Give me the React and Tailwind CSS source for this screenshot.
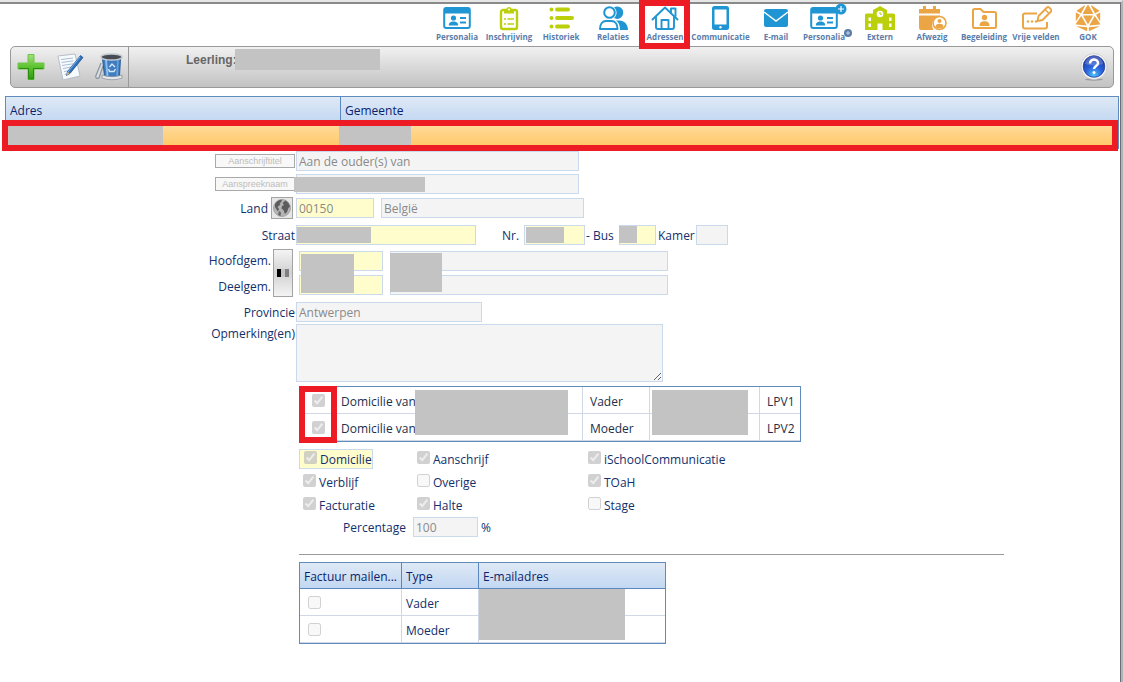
import React from "react";
import { FaDiceD20 } from "react-icons/fa";

const BLUE = "#1f96d3";
const LIME = "#bccf0b";
const ORANGE = "#eca545";

function IdCard() {
  return (
    <>
      <rect x="1.2" y="2" width="25.6" height="20" rx="2" fill="none" stroke={BLUE} strokeWidth="2" />
      <path d="M1 3h26v4.5H1z" fill={BLUE} />
      <circle cx="10.5" cy="12" r="2.6" fill={BLUE} />
      <path d="M5.8 19.5c0-3 2-4 4.700-4s4.700 1 4.700 4z" fill={BLUE} />
      <path d="M17 12h6M17 16.500h6" stroke={BLUE} strokeWidth="2" />
    </>
  );
}

const icons = {
  card: <IdCard />,
  clipboard: (
    <>
      <rect x="6" y="4" width="16" height="19" rx="2" fill="none" stroke={LIME} strokeWidth="2.4" />
      <path d="M9 7.500V3.500h2.500a2.500 2.500 0 0 1 5 0H19v4z" fill={LIME} />
      <circle cx="14" cy="3.500" r="1" fill="#fff" />
      <path d="M9 13h2M9 18h2M12.500 13H19M12.500 18H19" stroke={LIME} strokeWidth="1.700" />
    </>
  ),
  list: (
    <>
      <circle cx="4.500" cy="3.500" r="2" fill={LIME} />
      <circle cx="4.500" cy="12" r="2" fill={LIME} />
      <circle cx="4.500" cy="20.500" r="2" fill={LIME} />
      <path d="M10 3.500h11M10 12h15M10 20.500h11" stroke={LIME} strokeWidth="4" strokeLinecap="round" />
    </>
  ),
  people: (
    <>
      <circle cx="10.500" cy="6.500" r="5.300" fill="none" stroke={BLUE} strokeWidth="2" />
      <path d="M15 1.300a6.200 6.200 0 1 1 0 10.800c3.400-3 3.400-7.800 0-10.800z" fill={BLUE} />
      <path d="M1 23c0-5.200 2.600-8 6-8h5.500c3.400 0 6 2.800 6 8z" fill="none" stroke={BLUE} strokeWidth="2" strokeLinejoin="round" />
      <path d="M17 14.500h3.500c4.500 0 8.500 3.800 8.500 9.500h-8c0-4.300-1-7.500-4-9.500z" fill={BLUE} />
    </>
  ),
  house: (
    <g fill="none" stroke={BLUE} strokeWidth="1.900" strokeLinecap="round" strokeLinejoin="round">
      <path d="M1.500 13.500 14 1.500l12.500 12" />
      <path d="M5 11v10a2 2 0 0 0 2 2h14a2 2 0 0 0 2-2V11" />
      <path d="M20 6.500V2.500h4.500V10" />
      <path d="M10.500 22.500V14h7v8.500" />
    </g>
  ),
  phone: (
    <>
      <rect x="6" y="0" width="17" height="24" rx="2.500" fill={BLUE} />
      <path d="M8.500 3.500h12v15h-12z" fill="#fff" />
      <circle cx="14.500" cy="21.300" r="1.200" fill="#fff" />
    </>
  ),
  mail: (
    <>
      <rect x="2" y="3" width="24" height="18" rx="2" fill={BLUE} />
      <path d="m2 6 12 9 12-9" fill="none" stroke="#fff" strokeWidth="1.500" />
    </>
  ),
  cardPlus: <IdCard />,
  school: (
    <>
      <path d="M-1 9q0-1.500 1.500-1.500H7V4l7-4 7 4v3.500h6.500Q29 7.500 29 9v15H-1z" fill={LIME} />
      <circle cx="14" cy="8" r="3.300" fill="#fff" />
      <path d="M14 6v2.200h2" fill="none" stroke={LIME} />
      <path d="M11.500 24v-6.500h5V24zM2.500 11.500H5V15H2.500zM2.500 17.500H5V21H2.500zM23 11.500h2.500V15H23zM23 17.500h2.500V21H23z" fill="#fff" />
    </>
  ),
  absent: (
    <>
      <path d="M1 3h4V0h3v3h7V0h3v3h4v4.500H1zM1 9.500h21v1c-7 .500-10 7-6.500 13.500H3q-2 0-2-2z" fill={ORANGE} />
      <circle cx="21.500" cy="17" r="6.500" fill="#fff" stroke={ORANGE} strokeWidth="1.600" />
      <circle cx="21.500" cy="15" r="2" fill={ORANGE} />
      <path d="M17.500 21c0-2.500 1.500-3.300 4-3.300s4 .800 4 3.300c-2 2-6 2-8 0z" fill={ORANGE} />
    </>
  ),
  folder: (
    <>
      <path d="M3 4.500q0-1.500 1.500-1.500h6l3 3h11q1.500 0 1.500 1.500v13q0 1.500-1.500 1.500h-20Q3 22 3 20.500z" fill="none" stroke={ORANGE} strokeWidth="2" />
      <circle cx="14.500" cy="11.500" r="2.700" fill={ORANGE} />
      <path d="M9.500 20c0-3.500 2-4.800 5-4.800s5 1.300 5 4.800z" fill={ORANGE} />
    </>
  ),
  pencil: (
    <>
      <path d="M15 7.500H3Q1 7.500 1 9.500v11q0 2 2 2h20q2 0 2-2V16" fill="none" stroke={ORANGE} strokeWidth="2" />
      <path d="m15.500 15 1-5L25 1.500q1-1 2.200 0L29 3.300q1 1 0 2.200L20.500 14z" fill="none" stroke={ORANGE} strokeWidth="1.900" />
      <path d="m23 3.500 4 4" stroke={ORANGE} strokeWidth="1.500" />
      <circle cx="6" cy="15.500" r="1.200" fill={ORANGE} />
      <circle cx="10" cy="15.500" r="1.200" fill={ORANGE} />
      <circle cx="14" cy="15.500" r="1.200" fill={ORANGE} />
    </>
  ),
  die: <FaDiceD20 x="1" y="-1" size={26} color={ORANGE} />,
};

const navItems = [
  ["Personalia", "card"],
  ["Inschrijving", "clipboard"],
  ["Historiek", "list"],
  ["Relaties", "people"],
  ["Adressen", "house"],
  ["Communicatie", "phone"],
  ["E-mail", "mail"],
  ["Personalia", "cardPlus"],
  ["Extern", "school"],
  ["Afwezig", "absent"],
  ["Begeleiding", "folder"],
  ["Vrije velden", "pencil"],
  ["GOK", "die"],
];

function NavItem({ label, icon }) {
  const wide = icon === "phone";
  const plus = icon === "cardPlus";
  return (
    <a
      href="#"
      className={`relative flex shrink-0 flex-col items-center pt-px ${wide ? "w-[59px]" : "w-[52px]"} ${
        plus ? "pr-2" : ""
      }`}
    >
      <svg viewBox="-1 -1 31 26" className="h-[26px] w-[31px]" aria-hidden="true">
        {icons[icon]}
      </svg>
      <span className="whitespace-nowrap text-[8px] leading-[12px] font-bold text-[#5b7daa]">{label}</span>
      {plus && (
        <svg viewBox="0 0 12 12" className="absolute top-[-1px] right-[7px] size-3" aria-hidden="true">
          <circle cx="6" cy="6" r="5.500" fill={BLUE} />
          <path d="M6 3v6M3 6h6" stroke="#fff" strokeWidth="1.200" />
        </svg>
      )}
      {plus && (
        <svg viewBox="0 0 8 8" className="absolute top-[25px] right-[2px] size-2" aria-hidden="true">
          <circle cx="4" cy="4" r="4" fill="#5b7daa" />
          <path d="M4 2v4M2 4h4" stroke="#c9d5e6" />
        </svg>
      )}
      {icon === "house" && (
        <span className="pointer-events-none absolute top-[-4px] left-0 z-10 h-[49px] w-[51px] border-6 border-[#ed1c24]" />
      )}
    </a>
  );
}

function PlusIcon() {
  return (
    <svg viewBox="0 0 28 28" className="size-7" aria-hidden="true">
      <defs>
        <linearGradient id="plus" x1="0" y1="0" x2="0" y2="1">
          <stop offset="0" stopColor="#a6e07c" />
          <stop offset=".5" stopColor="#5cc22f" />
          <stop offset="1" stopColor="#2e9a10" />
        </linearGradient>
      </defs>
      <path d="M11 1.500h6V10h10v6H17v10.500h-6V16H1v-6h10z" fill="url(#plus)" stroke="#6cc444" strokeLinejoin="round" />
      <path d="M2 15.500h9.500V26h5V15.500H26" fill="none" stroke="#2a8c10" />
    </svg>
  );
}

function NoteIcon() {
  return (
    <svg viewBox="0 0 28 28" className="size-7" aria-hidden="true">
      <path d="m2 3 17-2 5 22-17 4z" fill="#f8fbfe" stroke="#b6bec8" />
      <path d="m5 6.500 12-1.500M5.500 9.500l12-1.700M6 12.500l11-1.700M7 15.500l8-1.500M8 18.500l6-1M8.500 21.500l5-1" stroke="#a7bdd4" />
      <path d="M24.500 2.500 11.500 18.500l-1 4 3.500-2L27 4.500z" fill="#2f6fb7" stroke="#1d4e8c" strokeWidth=".7" />
      <path d="m24 4-12 15" stroke="#73b2ea" />
      <path d="m11.500 18.700-1 3.800 3.300-2z" fill="#e3b65c" />
    </svg>
  );
}

function TrashIcon() {
  return (
    <svg viewBox="0 0 28 28" className="size-7" aria-hidden="true">
      <path d="M6 10 .8 23c-.5 2.500 2.500 3.500 3.500 1L8 13" fill="#d8dde2" stroke="#8b949d" strokeWidth="1.200" />
      <path d="M7.500 5h18l-1 18q-7.500 3-15 0z" fill="#3f7cc0" stroke="#2a5c97" />
      <path d="m11 7 1.500 16" stroke="#8dbdec" strokeWidth="2" />
      <path d="m23 7-1 16" stroke="#6ba4dd" strokeWidth="1.500" />
      <ellipse cx="16.500" cy="4" rx="10.500" ry="3" fill="#474c52" stroke="#c3c8cd" strokeWidth="1.500" />
      <path d="M7 22q10 3.500 20 0v3q-10 3.500-20 0z" fill="#e6e9ec" stroke="#858d95" strokeWidth=".7" />
      <path d="m14.500 14 2.500-3 3 3M20.500 16l-1.500 2.500h-4.500L13.500 16" fill="none" stroke="#d6e8fa" strokeWidth="1.400" />
    </svg>
  );
}

function HelpIcon() {
  return (
    <svg viewBox="0 0 28 28" className="size-7" aria-hidden="true">
      <defs>
        <radialGradient id="help" cx=".5" cy=".9" r=".8">
          <stop offset="0" stopColor="#4fc3ff" />
          <stop offset=".5" stopColor="#2a62da" />
          <stop offset="1" stopColor="#1d3aa8" />
        </radialGradient>
      </defs>
      <ellipse cx="14" cy="26.500" rx="9" ry="1.200" fill="#9a9a9a" />
      <circle cx="14" cy="13.500" r="13" fill="#f6f6f6" stroke="#c4c4c4" strokeWidth=".7" />
      <circle cx="14" cy="13.500" r="10.800" fill="url(#help)" stroke="#1b318f" strokeWidth=".7" />
      <path d="M5 11a9 8 0 0 1 18 0q-9 3-18 0z" fill="#fff" opacity=".22" />
      <path d="M10 10.500c0-5.500 8.500-5 8 0-.3 2.500-4 2.800-4 5.500" fill="none" stroke="#fff" strokeWidth="2.500" />
      <circle cx="14" cy="19.500" r="1.500" fill="#fff" />
    </svg>
  );
}

function Globe() {
  return (
    <svg viewBox="0 0 18 18" className="size-[18px]" aria-hidden="true">
      <circle cx="9" cy="9" r="8.500" fill="#b4b4b4" stroke="#999" strokeWidth=".8" />
      <path d="M2 5q3-4.500 7-4.300L8 3.500 6.500 4l1 1.500L4.500 8l1.500 2-1 2.500L2 8z" fill="#5c5c5c" />
      <path d="m9.500 4 3-2.500q3.500 2 4.500 6L15.500 9 14 13l-2 2-1.500-4-2-1.500L9 7l2-1z" fill="#5c5c5c" />
      <path d="m6 12 2 1.500L7.500 17 5 16z" fill="#666" />
    </svg>
  );
}

const Mask = ({ className }) => <span aria-hidden="true" className={`absolute bg-[#c3c3c3] ${className}`} />;

function Field({ label, value = "", yellow, className, mask }) {
  return (
    <span className={`relative flex h-5 ${className}`}>
      <input
        id={label}
        aria-label={label}
        disabled
        defaultValue={value}
        className={`h-5 w-full min-w-0 border border-[#cbd9ec] px-[2px] text-[12px] text-[#8a8a8a] ${
          yellow ? "bg-[#fffdcb]" : "bg-[#f4f4f4]"
        }`}
      />
      {mask && <Mask className={mask} />}
    </span>
  );
}

const Label = ({ htmlFor, children }) => (
  <label htmlFor={htmlFor} className="w-[296px] shrink-0 pt-[2px] pr-px text-right">
    {children}
  </label>
);

function SmallButton({ children }) {
  return (
    <span className="flex w-[295px] shrink-0 justify-end">
      <button
        disabled
        className="h-[14px] w-20 border border-[#a9a9a9] bg-[#f8f8f8] text-center font-['Liberation_Sans',sans-serif] text-[9px] leading-3 text-[#bdbdbd]"
      >
        {children}
      </button>
    </span>
  );
}

function Check({ label, checked }) {
  return (
    <label className="flex h-[18px] items-center gap-[3px] whitespace-nowrap">
      <input type="checkbox" disabled defaultChecked={checked} className="mb-[3px] size-[13px] shrink-0" />
      <span className="pt-[2px]">{label}</span>
    </label>
  );
}

const headCell = "border-r border-[#5b87bf] px-1 pt-[2px] text-left font-normal last:border-r-0";
const cell = "h-[27px] border-r border-b border-[#d0d7e5] last:border-r-0";
const textCell = "pt-1";

export default function App() {
  return (
    <div className="min-h-screen border-t-2 border-r-2 border-t-[#e6e6e6] border-r-[#b4b4b4] bg-white font-['Open_Sans','Noto_Sans',sans-serif] text-[12px] leading-4 text-[#12306b]">
      <div className="flex min-h-[680px] flex-col border-t-2 border-r border-t-[#8a8a8a] border-r-[#6b6f78]">
        <nav className="flex h-[42px] justify-end pr-[6px]">
          {navItems.map(([label, icon]) => (
            <NavItem key={icon} label={label} icon={icon} />
          ))}
        </nav>

        <div className="mr-[6px] ml-[10px] flex h-[42px] items-center rounded-[5px] border border-[#999] bg-linear-to-b from-[#f1f1f1] to-[#c2c2c2]">
          <div className="flex h-full w-[118px] items-center gap-[11px] border-r border-[#999] pl-[6px]">
            <button aria-label="Toevoegen"><PlusIcon /></button>
            <button aria-label="Wijzigen"><NoteIcon /></button>
            <button aria-label="Verwijderen"><TrashIcon /></button>
          </div>
          <div className="flex flex-1 items-start self-stretch pt-[2px] pl-[57px] font-['Liberation_Sans',sans-serif] font-bold text-[#666]">
            <span className="w-[49px] pt-[3px]">Leerling:</span>
            <span aria-hidden="true" className="h-[21px] w-[145px] bg-[#c3c3c3]" />
          </div>
          <button aria-label="Help" className="mr-[5px]"><HelpIcon /></button>
        </div>

        <div className="relative mt-2 mr-px ml-[5px]">
          <table className="w-full table-fixed border-separate border-spacing-0 border border-[#5f8bbd] border-b-0">
            <colgroup>
              <col className="w-[335px]" />
              <col />
            </colgroup>
            <thead>
              <tr className="h-[26px] bg-linear-to-b from-[#dfe9f6] to-[#c1d7f2] text-[#0a1f6e]">
                <th className={headCell}>Adres</th>
                <th className={headCell}>Gemeente</th>
              </tr>
            </thead>
            <tbody>
              <tr className="h-[26px] bg-linear-to-b from-[#ffdc9f] to-[#ffc65e]">
                <td aria-label="Adres" />
                <td aria-label="Gemeente" />
              </tr>
            </tbody>
          </table>
          <Mask className="top-[29px] left-[3px] h-5 w-[155px]" />
          <Mask className="top-[29px] left-[334px] h-5 w-[72px]" />
          <span className="pointer-events-none absolute top-6 right-px left-[-3px] h-[31px] border-6 border-[#ed1c24]" />
        </div>

        <form className="pt-[2px]">
          <div className="flex items-center gap-px">
            <SmallButton>Aanschrijftitel</SmallButton>
            <Field label="Aanschrijftitel" value="Aan de ouder(s) van" className="w-[283px]" />
          </div>
          <div className="mt-[3px] flex items-center gap-px">
            <SmallButton>Aanspreeknaam</SmallButton>
            <Field label="Aanspreeknaam" className="w-[283px]" mask="top-[3px] left-[-2px] h-[15px] w-[131px]" />
          </div>
          <div className="mt-[3px] flex items-center">
            <span className="flex w-[293px] items-center justify-end gap-[3px]">
              <label htmlFor="Land" className="pt-[2px]">Land</label>
              <button
                type="button"
                aria-label="Land kiezen"
                className="flex size-[22px] items-center justify-center border border-[#a3a3a3] bg-[#e6e6e6]"
              >
                <Globe />
              </button>
            </span>
            <Field label="Land" value="00150" yellow className="ml-[3px] w-[78px]" />
            <Field label="Landnaam" value="België" className="ml-[7px] w-[203px]" />
          </div>
          <div className="mt-[6px] flex items-center">
            <Label htmlFor="Straat">Straat</Label>
            <Field label="Straat" yellow className="w-[180px]" mask="top-[2px] left-px h-4 w-[74px]" />
            <label htmlFor="Nr." className="w-12 pt-[2px] pl-[26px]">Nr.</label>
            <Field label="Nr." yellow className="w-[61px]" mask="top-[2px] left-[2px] h-4 w-[38px]" />
            <label htmlFor="Bus" className="w-[34px] pt-[2px] pl-px whitespace-nowrap">- Bus</label>
            <Field label="Bus" yellow className="w-[37px]" mask="top-px left-0 h-[17px] w-[18px]" />
            <label htmlFor="Kamer" className="w-10 pt-[2px] pl-[2px] whitespace-nowrap">Kamer</label>
            <Field label="Kamer" className="w-8" />
          </div>
          <div className="relative mt-1 flex h-12 items-center">
            <div className="flex w-[271px] flex-col gap-[10px] pt-[2px] text-right">
              <label htmlFor="Hoofdgem.">Hoofdgem.</label>
              <label htmlFor="Deelgem.">Deelgem.</label>
            </div>
            <button
              type="button"
              aria-label="Gemeente kiezen"
              className="ml-[2px] flex h-12 w-5 items-center justify-center border border-[#a3a3a3] bg-linear-to-b from-[#f4f4f4] via-[#d2d2d2] to-[#f4f4f4]"
            >
              <span className="h-2 w-1 bg-black" />
              <span className="h-2 w-1 bg-[#c4c4c4]" />
              <span className="h-2 w-1 bg-[#808080]" />
            </button>
            <div className="relative ml-[6px] flex w-[84px] flex-col gap-1">
              <Field label="Hoofdgem." yellow className="w-full" />
              <Field label="Deelgem." yellow className="w-full" />
              <Mask className="top-[3px] left-[2px] h-[39px] w-[53px]" />
            </div>
            <div className="relative ml-[7px] flex w-[278px] flex-col gap-1">
              <Field label="Naam hoofdgemeente" className="w-full" />
              <Field label="Naam deelgemeente" className="w-full" />
              <Mask className="top-[2px] left-0 h-[39px] w-[52px]" />
            </div>
          </div>
          <div className="mt-[5px] flex items-center">
            <Label htmlFor="Provincie">Provincie</Label>
            <Field label="Provincie" value="Antwerpen" className="w-[186px]" />
          </div>
          <div className="mt-[2px] flex items-start">
            <Label htmlFor="opmerking">Opmerking(en)</Label>
            <textarea id="opmerking" disabled className="h-[58px] w-[367px] border border-[#cbd9ec] bg-[#f4f4f4]" />
          </div>

          <div className="mt-1 ml-[299px]">
            <div className="relative w-[502px]">
              <table className="w-full table-fixed border-separate border-spacing-0 border border-[#5f8bbd] text-[#222f4a]">
                <colgroup>
                  <col className="w-9" />
                  <col className="w-[247px]" />
                  <col className="w-[67px]" />
                  <col className="w-[110px]" />
                  <col />
                </colgroup>
                <tbody>
                  {[["Vader", "LPV1"], ["Moeder", "LPV2"]].map(([who, code]) => (
                    <tr key={code}>
                      <td className={`${cell} pl-3`}>
                        <input type="checkbox" aria-label={who} disabled defaultChecked className="block size-[13px]" />
                      </td>
                      <td className={`${cell} ${textCell} pl-[5px]`}>Domicilie van</td>
                      <td className={`${cell} ${textCell} pl-[7px]`}>{who}</td>
                      <td className={cell} />
                      <td className={`${cell} ${textCell} pl-[7px]`}>{code}</td>
                    </tr>
                  ))}
                </tbody>
              </table>
              <Mask className="top-1 left-[116px] h-[45px] w-[153px]" />
              <Mask className="top-1 left-[353px] h-[45px] w-24" />
              <span className="pointer-events-none absolute top-0 left-0 h-[57px] w-[38px] border-6 border-[#ed1c24]" />
            </div>

            <div className="mt-2 grid grid-cols-[114px_171px_200px] gap-y-[5px]">
              <div className="flex">
                <div className="-my-px border border-[#cbd9ec] bg-[#fffdcb] pl-1"><Check label="Domicilie" checked /></div>
              </div>
              <div className="pl-1"><Check label="Aanschrijf" checked /></div>
              <div className="pl-1"><Check label="iSchoolCommunicatie" checked /></div>
              <div className="pl-1"><Check label="Verblijf" checked /></div>
              <div className="pl-1"><Check label="Overige" /></div>
              <div className="pl-1"><Check label="TOaH" checked /></div>
              <div className="pl-1"><Check label="Facturatie" checked /></div>
              <div className="pl-1"><Check label="Halte" checked /></div>
              <div className="pl-1"><Check label="Stage" /></div>
            </div>
            <div className="mt-[3px] flex items-center">
              <label htmlFor="Percentage" className="w-[114px] pt-[2px] pr-[7px] text-right">Percentage</label>
              <Field label="Percentage" value="100" className="w-[65px]" />
              <span className="pt-[2px] pl-[3px]">%</span>
            </div>

            <hr className="mt-[17px] max-w-[705px] border-t border-[#999]" />

            <div className="relative mt-[7px] w-[367px]">
              <table className="w-full table-fixed border-separate border-spacing-0 border border-[#5f8bbd]">
                <colgroup>
                  <col className="w-[102px]" />
                  <col className="w-[77px]" />
                  <col />
                </colgroup>
                <thead>
                  <tr className="h-[26px] bg-linear-to-b from-[#dfe9f6] to-[#c1d7f2] text-[#0a1f6e]">
                    <th className={`${headCell} border-b whitespace-nowrap`}>Factuur mailen...</th>
                    <th className={`${headCell} border-b`}>Type</th>
                    <th className={`${headCell} border-b`}>E-mailadres</th>
                  </tr>
                </thead>
                <tbody>
                  {["Vader", "Moeder"].map((who) => (
                    <tr key={who}>
                      <td className={`${cell} pl-2`}>
                        <input type="checkbox" aria-label={`Factuur mailen ${who}`} disabled className="block size-[13px]" />
                      </td>
                      <td className={`${cell} ${textCell} pl-1`}>{who}</td>
                      <td className={cell} />
                    </tr>
                  ))}
                </tbody>
              </table>
              <Mask className="top-[27px] left-[180px] h-[51px] w-[146px]" />
            </div>
          </div>
        </form>
      </div>
    </div>
  );
}
